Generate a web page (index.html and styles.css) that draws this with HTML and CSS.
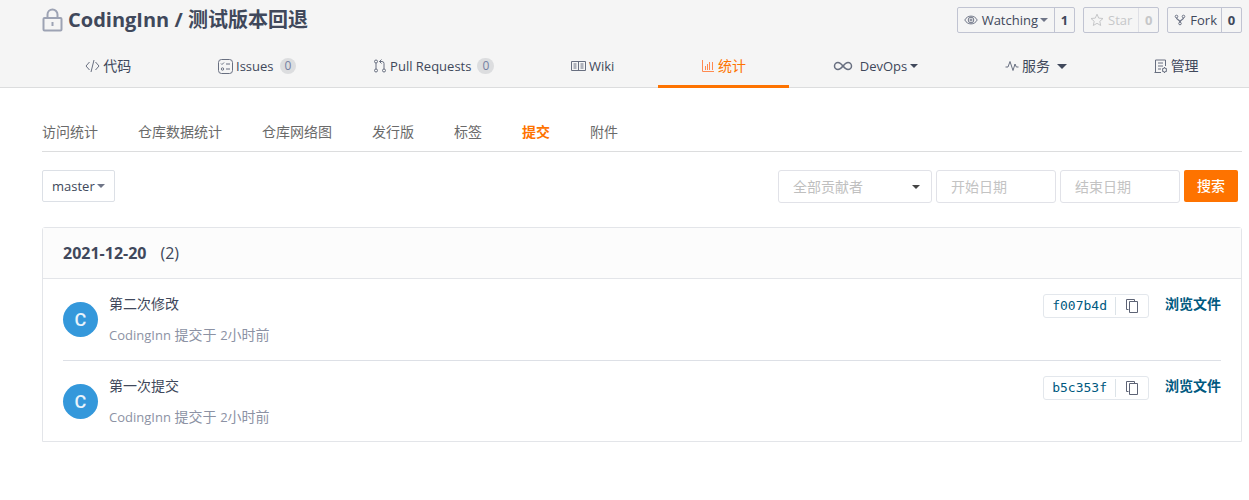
FILE: index.html
```html
<!DOCTYPE html>
<html lang="zh-CN">
<head>
<meta charset="utf-8">
<meta name="viewport" content="width=device-width, initial-scale=1">
<title>CodingInn / 测试版本回退</title>
<link rel="stylesheet" href="styles.css">
</head>
<body>
<header class="repo-header">
  <div class="repo-top">
    <h1 class="repo-title">
      <svg class="lock" width="21" height="24" viewBox="0 0 21 24"><path d="M5.500 10V6.500a5 5 0 0 1 10 0V10"/><rect x="1.500" y="10" width="18" height="12.500" rx="1"/><path d="M10.500 14v4"/></svg>
      <span>CodingInn / 测试版本回退</span>
    </h1>
    <div class="actions">
      <div class="action">
        <button class="action-main" type="button"><svg width="14" height="14" viewBox="0 0 14 14"><path d="M.8 7C3.500 1.800 10.500 1.800 13.200 7 10.500 12.200 3.500 12.200.8 7z"/><circle cx="7" cy="7" r="2.800"/><circle cx="7" cy="7" r="1"/></svg>Watching<i class="caret muted"></i></button>
        <a class="count" href="#">1</a>
      </div>
      <div class="action disabled">
        <button class="action-main" type="button" disabled><svg width="14" height="14" viewBox="0 0 14 14"><path d="M7 1.200l1.700 3.900 4.300.4-3.200 2.800.9 4.200L7 10.300l-3.700 2.200.9-4.200L1 5.500l4.300-.4z"/></svg>Star</button>
        <span class="count">0</span>
      </div>
      <div class="action">
        <button class="action-main fork" type="button"><svg width="12" height="14" viewBox="0 0 12 14"><circle cx="2.500" cy="3.500" r="1.300"/><circle cx="9.500" cy="3.500" r="1.300"/><circle cx="6" cy="10.500" r="1.300"/><path d="M2.500 4.800C2.500 7 6 6.500 6 9.200M9.500 4.800C9.500 7 6 6.500 6 9.200" stroke-width="1.300"/></svg>Fork</button>
        <a class="count" href="#">0</a>
      </div>
    </div>
  </div>
  <nav class="tabs">
    <a class="tab cjk" href="#"><svg width="15" height="14" viewBox="0 0 15 14"><path d="M4.500 3L1 7l3.500 4M10.500 3L14 7l-3.500 4M9 1L6 13"/></svg>代码</a>
    <a class="tab" href="#"><svg width="15" height="15" viewBox="0 0 15 15"><rect x=".5" y=".5" width="14" height="14" rx="3"/><path d="M3 4.500l1 1 2-2M8 5h4M8 10h4"/><circle cx="4.500" cy="10" r="1.200"/></svg>Issues<span class="badge">0</span></a>
    <a class="tab" href="#"><svg width="14" height="14" viewBox="0 0 14 14"><circle cx="3" cy="2.500" r="1.500"/><circle cx="3" cy="11.500" r="1.500"/><circle cx="11" cy="11.500" r="1.500"/><path d="M3 4v6M11 10V4.500q0-2-2-2H6.500M8.500.5l-2 2 2 2"/></svg>Pull Requests<span class="badge">0</span></a>
    <a class="tab" href="#"><svg width="15" height="14" viewBox="0 0 15 14"><path d="M.5 2.500h14v9H.5zM7.500 2.500v9M2.500 5h3M2.500 7h3M2.500 9h3M9.500 5h3M9.500 7h3M9.500 9h3"/></svg>Wiki</a>
    <a class="tab cjk active" href="#" aria-current="page"><svg width="14" height="14" viewBox="0 0 14 14"><path d="M1.500 1v11.500H13M4.500 7v4M6.500 5v6M8.500 3v8M11.500 3v8"/></svg>统计</a>
    <a class="tab devops" href="#"><svg width="20" height="12" viewBox="0 0 20 12"><path d="M10 6C8 3.500 7 2.500 5 2.500a3.500 3.500 0 0 0 0 7C7 9.500 8 8.500 10 6s3-3.500 5-3.500a3.500 3.500 0 0 1 0 7c-2 0-3-1-5-3.500z" stroke-width="1.500"/></svg>DevOps<i class="caret"></i></a>
    <a class="tab cjk service" href="#"><svg width="14" height="14" viewBox="0 0 14 14"><path d="M.5 8H3l2-5.500 3 9L10 5l1.300 3h2.200"/></svg>服务<i class="caret large"></i></a>
    <a class="tab cjk" href="#"><svg width="14" height="15" viewBox="0 0 14 15"><path d="M7 13.500H1.500V1h10v6M4 4h5M4 7h5M4 10h3M.5 13.500H7"/><circle cx="10.500" cy="11" r="2"/><path d="M10.500 8v1M10.500 13v1M8 9.500l.8.500M13 9.500l-.8.500M8 12.500l.8-.5M13 12.500l-.8-.5"/></svg>管理</a>
  </nav>
</header>
<main class="content">
  <nav class="subnav">
    <a href="#">访问统计</a><a href="#">仓库数据统计</a><a href="#">仓库网络图</a><a href="#">发行版</a><a href="#">标签</a><a class="active" href="#" aria-current="page">提交</a><a href="#">附件</a>
  </nav>
  <form class="filters">
    <button class="branch" type="button">master<i class="caret muted"></i></button>
    <div class="search">
      <div class="select-wrap"><select class="field" aria-label="贡献者"><option>全部贡献者</option></select><i class="caret dark"></i></div>
      <input class="field date" type="text" placeholder="开始日期" aria-label="开始日期">
      <input class="field date" type="text" placeholder="结束日期" aria-label="结束日期">
      <button class="submit" type="button">搜索</button>
    </div>
  </form>
  <section class="panel">
    <h2 class="panel-head"><b>2021-12-20</b><span>(2)</span></h2>
    <ul class="commits">
      <li class="commit">
        <span class="avatar">C</span>
        <div class="info"><a class="message" href="#">第二次修改</a><p class="meta"><span class="latin">CodingInn</span> 提交于 <span class="latin">2</span>小时前</p></div>
        <div class="sha"><a href="#">f007b4d</a><button type="button" aria-label="复制"><svg width="14" height="16" viewBox="0 0 14 16"><path d="M3.500 11.500h-2v-10h8v2M4.500 3.500h8v11h-8z"/></svg></button></div>
        <a class="browse" href="#">浏览文件</a>
      </li>
      <li class="commit">
        <span class="avatar">C</span>
        <div class="info"><a class="message" href="#">第一次提交</a><p class="meta"><span class="latin">CodingInn</span> 提交于 <span class="latin">2</span>小时前</p></div>
        <div class="sha"><a href="#">b5c353f</a><button type="button" aria-label="复制"><svg width="14" height="16" viewBox="0 0 14 16"><path d="M3.500 11.500h-2v-10h8v2M4.500 3.500h8v11h-8z"/></svg></button></div>
        <a class="browse" href="#">浏览文件</a>
      </li>
    </ul>
  </section>
</main>
</body>
</html>
```
FILE: styles.css
```css
* { box-sizing: border-box; }
body {
  margin: 0;
  background: #fff;
  color: #40485b;
  font: 14px/20px "Open Sans", "Noto Sans CJK SC", sans-serif;
}
a { color: inherit; text-decoration: none; }
button, input, select { font: inherit; color: inherit; margin: 0; }
button { cursor: pointer; }
svg { fill: none; stroke: currentColor; flex: none; }

.caret {
  flex: none;
  border: 4px solid transparent;
  border-top-color: currentColor;
  border-bottom: 0;
}
.caret.muted { color: #6f7587; }
.caret.large { border-width: 5px 5px 0; }
.caret.dark { color: #444; }

.repo-header {
  padding: 0 7px 0 42px;
  background: #f5f5f5;
  border-bottom: 1px solid #dcddde;
}
.repo-top {
  display: flex;
  justify-content: space-between;
  align-items: center;
  height: 40px;
}
.repo-title {
  display: flex;
  align-items: center;
  gap: 5px;
  margin: 0;
  font-size: 20px;
  line-height: 28px;
}
.lock { stroke: #9da3b4; stroke-width: 2; }
.actions { display: flex; gap: 8px; font-size: 13px; }
.action {
  display: flex;
  height: 26px;
  border: 1px solid #c1c4d2;
  border-radius: 2px;
}
.action-main {
  display: flex;
  align-items: center;
  gap: 4px;
  padding: 0 6px;
  border: 0;
  background: none;
}
.action-main svg { color: #6f7587; }
.action-main .caret { margin-left: -2px; }
.count {
  padding: 0 5px;
  min-width: 20px;
  border-left: 1px solid #c1c4d2;
  font-weight: 700;
  line-height: 24px;
  text-align: center;
}
.fork { padding: 0 4px 0 6px; }
.disabled button, .disabled svg, .disabled .count { color: #c6c7c9; }
.disabled .count { border-color: #dfe0e6; }

.tabs {
  display: flex;
  height: 48px;
  margin-bottom: -1px;
}
.tab {
  display: flex;
  flex: 1 1 auto;
  align-items: center;
  justify-content: center;
  gap: 3px;
  padding-top: 7px;
  border-bottom: 3px solid transparent;
  font-size: 13px;
  white-space: nowrap;
}
.tab svg { color: #686f80; }
.tab.cjk { font-size: 14px; }
.tab.active { color: #fe7300; border-color: #fe7300; }
.tab.active svg { color: #ff8a50; }
.badge {
  margin: 0 -10px 0 3px;
  padding: 0 5px;
  border-radius: 8px;
  background: #dcdddf;
  color: #7580a3;
  font-size: 12px;
  line-height: 16px;
}
.tab.devops svg { margin-right: 4px; }
.tab.service .caret { margin-left: 4px; }

.content { padding: 24px 7px 24px 42px; }
.subnav {
  display: flex;
  gap: 40px;
  padding: 10px 0 9px;
  border-bottom: 1px solid #dcddde;
  color: #6a6a6a;
}
.subnav .active { color: #fe7300; font-weight: 700; }
.filters {
  display: flex;
  justify-content: space-between;
  padding: 18px 4px 24px 0;
}
.branch {
  display: flex;
  align-items: center;
  gap: 2px;
  height: 32px;
  padding: 0 9px;
  border: 1px solid #dce0e6;
  border-radius: 2px;
  background: #fff;
  font-size: 13px;
}
.search { display: flex; gap: 4px; }
.field {
  height: 33px;
  padding: 0 14px;
  border: 1px solid #e1e2e8;
  border-radius: 3px;
  background: #fff;
  color: #bfbfbf;
  appearance: none;
}
.field::placeholder { color: #c3c3c3; opacity: 1; }
.select-wrap { position: relative; }
.select-wrap .field { width: 154px; }
.select-wrap .caret { position: absolute; right: 12px; top: 15px; pointer-events: none; }
.date { width: 120px; }
.submit {
  width: 54px;
  height: 32px;
  padding: 0;
  border: 0;
  border-radius: 2px;
  background: #fe7300;
  color: #fff;
  font-weight: 500;
}

.panel { border: 1px solid #e3e5e9; border-radius: 3px 3px 0 0; }
.panel-head {
  display: flex;
  gap: 14px;
  margin: 0;
  padding: 15px 20px;
  border-bottom: 1px solid #e3e5e9;
  background: #fcfcfc;
  font-size: 16px;
  font-weight: 400;
}
.commits { margin: 0; padding: 0 20px; list-style: none; }
.commit {
  display: flex;
  align-items: flex-start;
  padding: 15px 0;
}
.commit + .commit { padding-bottom: 14px; border-top: 1px solid #dde0e6; }
.avatar {
  width: 35px;
  height: 35px;
  margin: 8px 11px 0 0;
  border-radius: 50%;
  background: #3498db;
  color: #e8f4fc;
  font: 500 18px/35px Roboto, sans-serif;
  text-align: center;
}
.info { flex: 1; }
.message { display: block; }
.meta { margin: 11px 0 0; color: #8c92a4; }
.latin { font-size: 13px; }
.sha {
  display: flex;
  align-items: center;
  height: 24px;
  margin-right: 16px;
  border: 1px solid #e3e7ec;
  border-radius: 3px;
  color: #005980;
  font: 13px/22px "DejaVu Sans Mono", monospace;
}
.sha a { padding: 0 8px; }
.sha button {
  display: flex;
  justify-content: center;
  align-items: center;
  width: 33px;
  height: 18px;
  padding: 0;
  border: 0;
  border-left: 1px solid #dce3e8;
  background: none;
  color: #5d6375;
}
.browse { color: #005980; font-weight: 700; }
```
